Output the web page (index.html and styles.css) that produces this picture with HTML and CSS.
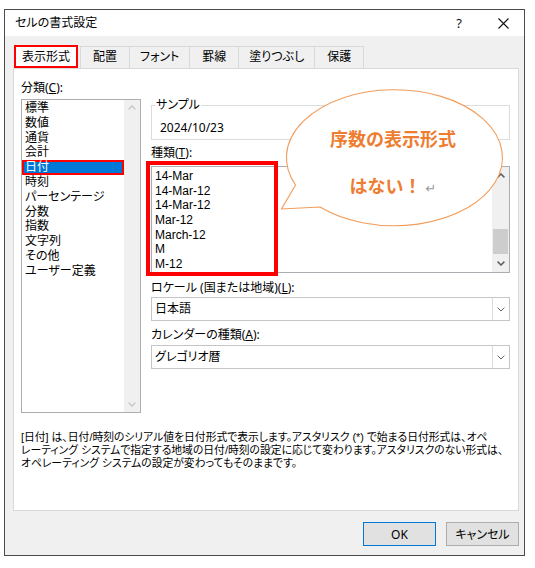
FILE: index.html
```html
<!DOCTYPE html>
<html lang="ja">
<head>
<meta charset="utf-8">
<title>セルの書式設定</title>
<link rel="stylesheet" href="styles.css">
</head>
<body>
<div class="dialog">
  <div class="titlebar">
    <span class="title">セルの書式設定</span>
    <div class="title-actions">
      <span class="title-btn help">?</span>
      <span class="title-btn">
        <svg class="close-icon" width="11" height="11" viewBox="0 0 11 11"><path d="M0.5 0.5 L10.5 10.5 M10.5 0.5 L0.5 10.5" stroke="#111" stroke-width="1.1" fill="none"/></svg>
      </span>
    </div>
  </div>

  <div class="dialog-body">
    <div class="tabs">
      <div class="tab tab-active">表示形式</div>
      <div class="tab">配置</div>
      <div class="tab">フォント</div>
      <div class="tab">罫線</div>
      <div class="tab">塗りつぶし</div>
      <div class="tab">保護</div>
    </div>

    <div class="panel">
      <div class="panel-grid">
        <div class="col-left">
          <div class="label">分類(<u>C</u>):</div>
          <div class="listbox category-list">
            <ul class="items">
              <li class="item">標準</li>
              <li class="item">数値</li>
              <li class="item">通貨</li>
              <li class="item">会計</li>
              <li class="item item-selected">日付</li>
              <li class="item">時刻</li>
              <li class="item">パーセンテージ</li>
              <li class="item">分数</li>
              <li class="item">指数</li>
              <li class="item">文字列</li>
              <li class="item">その他</li>
              <li class="item">ユーザー定義</li>
            </ul>
            <div class="scrollbar scrollbar-disabled">
              <div class="sb-arrow"><svg width="8" height="5" viewBox="0 0 8 5"><path d="M0.6 4.4 L4 1 L7.4 4.4" stroke="currentColor" stroke-width="1.3" fill="none"/></svg></div>
              <div class="sb-track"></div>
              <div class="sb-arrow"><svg width="8" height="5" viewBox="0 0 8 5"><path d="M0.6 0.6 L4 4 L7.4 0.6" stroke="currentColor" stroke-width="1.3" fill="none"/></svg></div>
            </div>
          </div>
        </div>

        <div class="col-right">
          <fieldset class="sample">
            <legend>サンプル</legend>
            <div class="sample-value">2024/10/23</div>
          </fieldset>

          <div class="label label-types">種類(<u>T</u>):</div>
          <div class="listbox type-list">
            <ul class="items">
              <li class="item">14-Mar</li>
              <li class="item">14-Mar-12</li>
              <li class="item">14-Mar-12</li>
              <li class="item">Mar-12</li>
              <li class="item">March-12</li>
              <li class="item">M</li>
              <li class="item">M-12</li>
            </ul>
            <div class="scrollbar">
              <div class="sb-arrow sb-arrow-tall"><svg width="8" height="5" viewBox="0 0 8 5"><path d="M0.6 4.4 L4 1 L7.4 4.4" stroke="currentColor" stroke-width="1.5" fill="none"/></svg></div>
              <div class="sb-track"><div class="sb-thumb"></div></div>
              <div class="sb-arrow sb-arrow-tall"><svg width="8" height="5" viewBox="0 0 8 5"><path d="M0.6 0.6 L4 4 L7.4 0.6" stroke="currentColor" stroke-width="1.5" fill="none"/></svg></div>
            </div>
            <div class="annotation-box"></div>
          </div>

          <div class="label label-locale">ロケール (国または地域)(<u>L</u>):</div>
          <div class="select">
            <span class="select-value">日本語</span>
            <span class="select-arrow"><svg width="8" height="5" viewBox="0 0 8 5"><path d="M0.6 0.6 L4 4 L7.4 0.6" stroke="#606060" stroke-width="1" fill="none"/></svg></span>
          </div>

          <div class="label label-calendar">カレンダーの種類(<u>A</u>):</div>
          <div class="select">
            <span class="select-value">グレゴリオ暦</span>
            <span class="select-arrow"><svg width="8" height="5" viewBox="0 0 8 5"><path d="M0.6 0.6 L4 4 L7.4 0.6" stroke="#606060" stroke-width="1" fill="none"/></svg></span>
          </div>
        </div>
      </div>

      <p class="description">[日付] は、日付/時刻のシリアル値を日付形式で表示します。アスタリスク (*) で始まる日付形式は、オペ<br>レーティング システムで指定する地域の日付/時刻の設定に応じて変わります。アスタリスクのない形式は、<br>オペレーティング システムの設定が変わってもそのままです。</p>
    </div>

    <div class="buttons">
      <button class="btn btn-default" type="button">OK</button>
      <button class="btn" type="button">キャンセル</button>
    </div>
  </div>

  <div class="callout">
    <svg class="callout-shape" width="240" height="160" viewBox="0 0 240 160">
      <path d="M50 127 A108 68 0 1 0 25.5 105 L11.5 129 Z" fill="#ffffff" stroke="#f29c5a" stroke-width="1.1" stroke-linejoin="miter"/>
    </svg>
    <div class="callout-text">
      <div class="callout-line">序数の表示形式</div>
      <div class="callout-line callout-line-second">はない！<span class="para-mark">↵</span></div>
    </div>
  </div>
</div>
</body>
</html>
```

FILE: styles.css
```css
* {
  box-sizing: border-box;
}

body {
  margin: 0;
  background: #ffffff;
  font-family: "Noto Sans", "Noto Sans CJK JP", sans-serif;
  font-feature-settings: "palt";
  font-size: 12px;
  color: #000000;
}

.dialog {
  position: relative;
  margin: 9px 0 0 4px;
  width: 521px;
  height: 547px;
  border: 1px solid #4a4a4a;
  background: #f0f0f0;
  display: flex;
  flex-direction: column;
}

/* Title bar */
.titlebar {
  height: 26px;
  flex: none;
  background: #ffffff;
  display: flex;
  align-items: center;
  justify-content: space-between;
  padding-left: 10px;
  padding-right: 7px;
}

.title {
  font-size: 12px;
  line-height: 26px;
}

.title-actions {
  display: flex;
  align-items: center;
  gap: 16px;
}

.title-btn {
  width: 28px;
  height: 26px;
  display: flex;
  align-items: center;
  justify-content: center;
}

.help {
  font-size: 13px;
  color: #111;
}

/* Body */
.dialog-body {
  flex: 1;
  display: flex;
  flex-direction: column;
  padding: 9px 5px 9px 8px;
}

.tabs {
  display: flex;
  align-items: flex-end;
  height: 23px;
  flex: none;
  padding-left: 1px;
}

.tab {
  height: 22px;
  line-height: 20px;
  min-width: 50px;
  padding: 0 10px;
  text-align: center;
  border: 1px solid #d9d9d9;
  border-bottom: none;
  margin-left: -1px;
  background: #f0f0f0;
  white-space: nowrap;
}

.tab-active {
  height: 23px;
  line-height: 19px;
  padding: 0 6px;
  margin-left: 0;
  margin-right: 2px;
  background: #ffffff;
  border: 2px solid #ff0000;
}

.tab-active + .tab {
  margin-left: 0;
}

.panel {
  flex: 1;
  background: #ffffff;
  border: 1px solid #d9d9d9;
  padding: 11px 7px 0 7px;
}

.panel-grid {
  display: grid;
  grid-template-columns: 120px 359px;
  column-gap: 10px;
}

.label {
  line-height: 16px;
  white-space: nowrap;
}

/* List boxes */
.listbox {
  position: relative;
  display: flex;
  border: 1px solid #abadb3;
  background: #ffffff;
}

.category-list {
  height: 314px;
  margin-top: 3px;
}

.items {
  list-style: none;
  margin: 0;
  padding: 0;
  flex: 1;
  min-width: 0;
  overflow: hidden;
  font-family: "Liberation Sans", "Noto Sans CJK JP", sans-serif;
}

.item {
  padding-left: 3px;
  white-space: nowrap;
}

.category-list .items {
  padding-top: 1px;
}

.category-list .item {
  height: 14.8px;
  line-height: 14.8px;
}

.item-selected {
  background: #0078d7;
  color: #ffffff;
  border: 2px solid #ff0000;
  padding-left: 1px;
}

.category-list .item-selected {
  line-height: 10.8px;
}

.scrollbar {
  width: 16px;
  flex: none;
  background: #f0f0f0;
  display: flex;
  flex-direction: column;
  color: #606060;
}

.scrollbar-disabled {
  color: #c3c3c3;
}

.sb-arrow {
  height: 15px;
  flex: none;
  display: flex;
  align-items: center;
  justify-content: center;
}

.sb-arrow-tall {
  height: 17px;
}

.sb-track {
  flex: 1;
  display: flex;
  flex-direction: column;
  justify-content: flex-end;
  align-items: center;
}

.sb-thumb {
  width: 15px;
  height: 25px;
  margin-bottom: 1px;
  background: #cdcdcd;
}

/* Right column */
.col-right {
  padding-top: 17px;
}

.sample {
  margin: 0;
  min-width: 0;
  padding: 7px 3px 3px 3px;
  border: 1px solid #dcdcdc;
}

.sample legend {
  padding: 0 1px;
  line-height: 16px;
}

.sample-value {
  line-height: 16px;
  padding-left: 5px;
}

.label-types {
  margin-top: 5px;
}

.type-list {
  height: 107px;
  margin-top: 5px;
}

.type-list .items {
  padding-top: 2px;
}

.type-list .item {
  height: 14.7px;
  line-height: 14.7px;
}

.type-list .scrollbar {
  width: 17px;
}

.annotation-box {
  position: absolute;
  left: -6px;
  top: -6px;
  width: 132px;
  height: 115px;
  border: 4px solid #ff0000;
  pointer-events: none;
}

.label-locale {
  margin-top: 7px;
}

.label-calendar {
  margin-top: 6px;
}

.select {
  display: flex;
  height: 24px;
  margin-top: 1px;
  border: 1px solid #c5c5c5;
  background: #ffffff;
}

.label-calendar + .select {
  margin-top: 2px;
}

.select-value {
  flex: 1;
  line-height: 22px;
  padding-left: 3px;
}

.select-arrow {
  width: 17px;
  flex: none;
  display: flex;
  align-items: center;
  justify-content: center;
  border-left: 1px solid #d9d9d9;
}

.description {
  margin: 18px 0 0 0;
  font-family: "Liberation Sans", "Noto Sans CJK JP", sans-serif;
  font-size: 10.8px;
  line-height: 13px;
  white-space: nowrap;
}

/* Buttons */
.buttons {
  flex: none;
  display: flex;
  justify-content: flex-end;
  gap: 10px;
  margin-top: 11px;
}

.btn {
  width: 73px;
  height: 24px;
  border: 1px solid #adadad;
  background: #e1e1e1;
  font-family: "Noto Sans", "Noto Sans CJK JP", sans-serif;
  font-feature-settings: "palt";
  font-size: 12px;
  color: #000;
  padding: 0;
}

.btn-default {
  border-color: #0078d7;
}

/* Callout annotation */
.callout {
  position: absolute;
  left: 265px;
  top: 70px;
  width: 240px;
  height: 160px;
  pointer-events: none;
}

.callout-shape {
  position: absolute;
  left: 0;
  top: 0;
}

.callout-text {
  position: absolute;
  left: 15px;
  top: 46px;
  width: 216px;
  text-align: center;
  color: #ed7d31;
  font-weight: bold;
  font-size: 18px;
  font-family: "Noto Sans CJK JP", sans-serif;
  font-feature-settings: normal;
}

.callout-line {
  line-height: 24px;
  white-space: nowrap;
}

.callout-line-second {
  margin-top: 23px;
}

.para-mark {
  font-family: "DejaVu Sans", sans-serif;
  font-weight: normal;
  font-size: 13px;
  color: #9a9a9a;
  margin-left: 4px;
}
```
